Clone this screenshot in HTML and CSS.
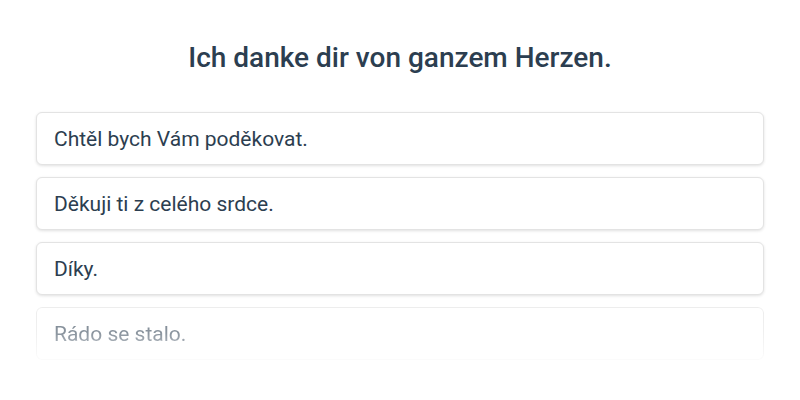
FILE: index.html
```html
<!DOCTYPE html>
<html lang="en">

<head>
    <meta charset="UTF-8">
    <meta name="viewport" content="width=device-width, initial-scale=1.0">
    <title>Quiz</title>

    <link rel="stylesheet" href="styles.css">
</head>

<body>
    <div class="container">
        <h1 class="question">Ich danke dir von ganzem Herzen.</h1>

        <div class="answers">
            <div class="answer">Chtěl bych Vám poděkovat.</div>
            <div class="answer">Děkuji ti z celého srdce.</div>
            <div class="answer">Díky.</div>
            <div class="answer faded">Rádo se stalo.</div>
        </div>
    </div>
</body>

</html>
```

FILE: styles.css
```css
body {
    margin: 0;
    background-color: #ffffff;
    font-family: Roboto, "Liberation Sans", sans-serif;
    color: #2c3e50;
}

.container {
    padding: 40px 36px 0 36px;
}

.question {
    margin: 0 0 36px 0;
    text-align: center;
    font-size: 28px;
    font-weight: 500;
    line-height: 36px;
}

.answers {
    display: flex;
    flex-direction: column;
    gap: 12px;
}

.answer {
    height: 53px;
    box-sizing: border-box;
    padding: 0 17px;
    display: flex;
    align-items: center;
    font-size: 21px;
    border: 1px solid #e3e3e3;
    border-radius: 6px;
    background-color: #ffffff;
    box-shadow: 0 1px 3px rgba(0, 0, 0, 0.12);
}

.faded {
    -webkit-mask-image: linear-gradient(to bottom, rgba(0, 0, 0, 0.65), rgba(0, 0, 0, 0.55) 50%, rgba(0, 0, 0, 0.15));
    mask-image: linear-gradient(to bottom, rgba(0, 0, 0, 0.65), rgba(0, 0, 0, 0.55) 50%, rgba(0, 0, 0, 0.15));
}
```
